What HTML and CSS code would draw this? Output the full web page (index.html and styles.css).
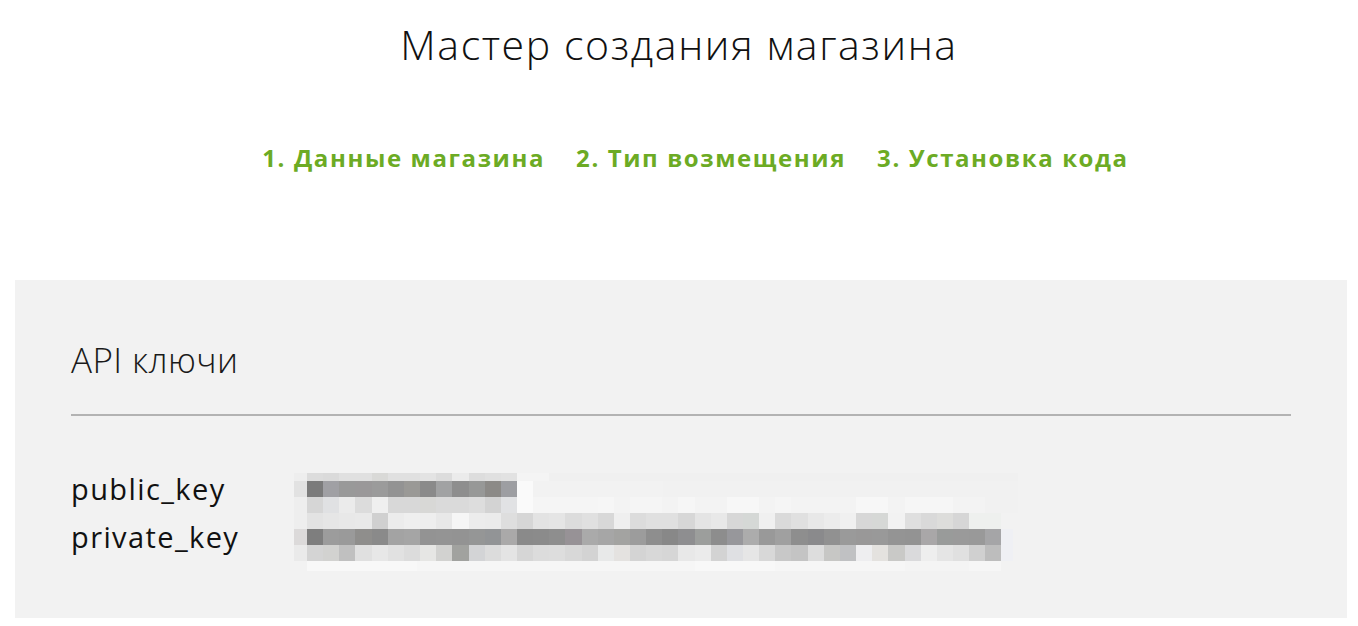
FILE: index.html
```html
<!DOCTYPE html>
<html lang="ru">
<head>
<meta charset="utf-8">
<title>Мастер создания магазина</title>
<link rel="stylesheet" href="styles.css">
</head>
<body>
<div class="page">
  <h1 class="title">Мастер создания магазина</h1>
  <nav class="steps">
    <span class="step">1. Данные магазина</span>
    <span class="step">2. Тип возмещения</span>
    <span class="step">3. Установка кода</span>
  </nav>
  <section class="panel">
    <h2 class="panel-title">API ключи</h2>
    <hr class="divider">
    <div class="keys">
      <div class="key-labels">
        <div class="key-label">public_key</div>
        <div class="key-label">private_key</div>
      </div>
      <svg class="key-values" width="724" height="98" viewBox="0 0 724 98" aria-hidden="true">
        <!-- row A -->
        <rect x="0" y="0" width="724" height="8" fill="#f0f0f0"/>
        <rect x="0" y="0" width="13" height="8" fill="#eeeeee"/>
        <rect x="13" y="0" width="17" height="8" fill="#dcdcdc"/>
        <rect x="29" y="0" width="17" height="8" fill="#dadada"/>
        <rect x="45" y="0" width="17" height="8" fill="#e0e0e0"/>
        <rect x="61" y="0" width="17" height="8" fill="#e0e0e0"/>
        <rect x="78" y="0" width="17" height="8" fill="#d9d9d7"/>
        <rect x="94" y="0" width="17" height="8" fill="#e0e0e0"/>
        <rect x="110" y="0" width="17" height="8" fill="#e0e0e0"/>
        <rect x="126" y="0" width="17" height="8" fill="#e3e3e3"/>
        <rect x="142" y="0" width="17" height="8" fill="#dcdcdc"/>
        <rect x="158" y="0" width="17" height="8" fill="#ebebeb"/>
        <rect x="175" y="0" width="17" height="8" fill="#dddddd"/>
        <rect x="191" y="0" width="17" height="8" fill="#e0e0e0"/>
        <rect x="207" y="0" width="16" height="8" fill="#e2e2e2"/>
        <rect x="223" y="0" width="32" height="8" fill="#f4f4f4"/>
        <!-- row B -->
        <rect x="0" y="8" width="724" height="16" fill="#f1f1f1"/>
        <rect x="0" y="8" width="13" height="16" fill="#e2e2e2"/>
        <rect x="13" y="8" width="17" height="16" fill="#7b7b7b"/>
        <rect x="29" y="8" width="17" height="16" fill="#a0a0a4"/>
        <rect x="45" y="8" width="17" height="16" fill="#999999"/>
        <rect x="61" y="8" width="17" height="16" fill="#9a9899"/>
        <rect x="78" y="8" width="17" height="16" fill="#9b9b9b"/>
        <rect x="94" y="8" width="17" height="16" fill="#939393"/>
        <rect x="110" y="8" width="17" height="16" fill="#9a9996"/>
        <rect x="126" y="8" width="17" height="16" fill="#8a8a8a"/>
        <rect x="142" y="8" width="17" height="16" fill="#a1a2a3"/>
        <rect x="158" y="8" width="17" height="16" fill="#8e8e8e"/>
        <rect x="175" y="8" width="17" height="16" fill="#979897"/>
        <rect x="191" y="8" width="17" height="16" fill="#8c8a87"/>
        <rect x="207" y="8" width="16" height="16" fill="#9d9ea2"/>
        <rect x="223" y="8" width="16" height="16" fill="#fafafa"/>
        <rect x="239" y="8" width="130" height="16" fill="#f2f2f2"/>
        <!-- row C -->
        <rect x="0" y="24" width="724" height="16" fill="#f3f3f3"/>
        <rect x="0" y="24" width="13" height="16" fill="#eeeeee"/>
        <rect x="13" y="24" width="17" height="16" fill="#d6d6d6"/>
        <rect x="29" y="24" width="17" height="16" fill="#e0e1e3"/>
        <rect x="45" y="24" width="17" height="16" fill="#ebebeb"/>
        <rect x="61" y="24" width="17" height="16" fill="#dcdcdc"/>
        <rect x="78" y="24" width="17" height="16" fill="#efefef"/>
        <rect x="94" y="24" width="17" height="16" fill="#d8d8d8"/>
        <rect x="110" y="24" width="17" height="16" fill="#d8d8d8"/>
        <rect x="126" y="24" width="17" height="16" fill="#d8d8d6"/>
        <rect x="142" y="24" width="17" height="16" fill="#dadada"/>
        <rect x="158" y="24" width="17" height="16" fill="#dadada"/>
        <rect x="175" y="24" width="17" height="16" fill="#dddddd"/>
        <rect x="191" y="24" width="17" height="16" fill="#d3d3d3"/>
        <rect x="207" y="24" width="16" height="16" fill="#e1e2e4"/>
        <rect x="223" y="24" width="16" height="16" fill="#fafafa"/>
        <rect x="239" y="24" width="65" height="16" fill="#f5f5f5"/>
        <rect x="304" y="24" width="16" height="16" fill="#f6f6f6"/>
        <rect x="336" y="24" width="32" height="16" fill="#f5f5f5"/>
        <rect x="384" y="24" width="17" height="16" fill="#f6f6f6"/>
        <rect x="433" y="24" width="32" height="16" fill="#f7f7f7"/>
        <rect x="481" y="24" width="16" height="16" fill="#f5f5f5"/>
        <rect x="562" y="24" width="32" height="16" fill="#f7f7f7"/>
        <rect x="611" y="24" width="48" height="16" fill="#f6f6f6"/>
        <rect x="691" y="24" width="33" height="16" fill="#f1f1f1"/>
        <!-- row D -->
        <rect x="0" y="40" width="13" height="16" fill="#eeeeee"/>
        <rect x="13" y="40" width="17" height="16" fill="#e3e3e3"/>
        <rect x="29" y="40" width="17" height="16" fill="#e6e6e6"/>
        <rect x="45" y="40" width="17" height="16" fill="#e8e8e8"/>
        <rect x="61" y="40" width="17" height="16" fill="#e9e9e9"/>
        <rect x="78" y="40" width="17" height="16" fill="#d0d0d0"/>
        <rect x="94" y="40" width="17" height="16" fill="#ececec"/>
        <rect x="110" y="40" width="17" height="16" fill="#efefef"/>
        <rect x="126" y="40" width="17" height="16" fill="#eeeeee"/>
        <rect x="142" y="40" width="17" height="16" fill="#e8e8e8"/>
        <rect x="158" y="40" width="17" height="16" fill="#f6f6f6"/>
        <rect x="175" y="40" width="17" height="16" fill="#ececec"/>
        <rect x="191" y="40" width="17" height="16" fill="#ebebeb"/>
        <rect x="207" y="40" width="17" height="16" fill="#dedede"/>
        <rect x="223" y="40" width="17" height="16" fill="#d6d6d6"/>
        <rect x="239" y="40" width="17" height="16" fill="#e3e3e3"/>
        <rect x="255" y="40" width="17" height="16" fill="#e5e5e5"/>
        <rect x="271" y="40" width="18" height="16" fill="#dcdcdc"/>
        <rect x="288" y="40" width="17" height="16" fill="#e0e0e0"/>
        <rect x="304" y="40" width="17" height="16" fill="#d8d8d8"/>
        <rect x="320" y="40" width="17" height="16" fill="#efefef"/>
        <rect x="336" y="40" width="17" height="16" fill="#dcdcdc"/>
        <rect x="352" y="40" width="17" height="16" fill="#e0e0e0"/>
        <rect x="368" y="40" width="17" height="16" fill="#e0e0e0"/>
        <rect x="384" y="40" width="18" height="16" fill="#d7d7d7"/>
        <rect x="401" y="40" width="17" height="16" fill="#e4e4e4"/>
        <rect x="417" y="40" width="17" height="16" fill="#e8e8e8"/>
        <rect x="433" y="40" width="17" height="16" fill="#d7d7d7"/>
        <rect x="449" y="40" width="17" height="16" fill="#d5d8d6"/>
        <rect x="465" y="40" width="17" height="16" fill="#f0f0f0"/>
        <rect x="481" y="40" width="17" height="16" fill="#dadada"/>
        <rect x="497" y="40" width="18" height="16" fill="#e0e0e0"/>
        <rect x="514" y="40" width="17" height="16" fill="#e8e8e8"/>
        <rect x="530" y="40" width="17" height="16" fill="#ececec"/>
        <rect x="546" y="40" width="17" height="16" fill="#f0f0f0"/>
        <rect x="562" y="40" width="17" height="16" fill="#d7d7d7"/>
        <rect x="578" y="40" width="17" height="16" fill="#d6d8d6"/>
        <rect x="594" y="40" width="18" height="16" fill="#f2f2f2"/>
        <rect x="611" y="40" width="17" height="16" fill="#dfdfdf"/>
        <rect x="627" y="40" width="17" height="16" fill="#d9d9d9"/>
        <rect x="643" y="40" width="17" height="16" fill="#dddddb"/>
        <rect x="659" y="40" width="17" height="16" fill="#d6d6d6"/>
        <rect x="675" y="40" width="32" height="16" fill="#eef0ee"/>
        <!-- row E -->
        <rect x="0" y="56" width="13" height="16" fill="#dcdada"/>
        <rect x="13" y="56" width="17" height="16" fill="#7e7e7e"/>
        <rect x="29" y="56" width="17" height="16" fill="#9c9c9c"/>
        <rect x="45" y="56" width="17" height="16" fill="#9a9a9a"/>
        <rect x="61" y="56" width="17" height="16" fill="#8f8e8c"/>
        <rect x="78" y="56" width="17" height="16" fill="#8a8a8a"/>
        <rect x="94" y="56" width="17" height="16" fill="#a3a3a3"/>
        <rect x="110" y="56" width="17" height="16" fill="#a5a5a5"/>
        <rect x="126" y="56" width="17" height="16" fill="#939393"/>
        <rect x="142" y="56" width="17" height="16" fill="#949494"/>
        <rect x="158" y="56" width="17" height="16" fill="#939393"/>
        <rect x="175" y="56" width="17" height="16" fill="#959696"/>
        <rect x="191" y="56" width="17" height="16" fill="#929496"/>
        <rect x="207" y="56" width="17" height="16" fill="#aaa9a9"/>
        <rect x="223" y="56" width="17" height="16" fill="#8a8a8a"/>
        <rect x="239" y="56" width="17" height="16" fill="#8b8b8b"/>
        <rect x="255" y="56" width="17" height="16" fill="#8e8e8e"/>
        <rect x="271" y="56" width="18" height="16" fill="#979296"/>
        <rect x="288" y="56" width="17" height="16" fill="#aaaaaa"/>
        <rect x="304" y="56" width="17" height="16" fill="#a6a6a6"/>
        <rect x="320" y="56" width="17" height="16" fill="#a3a3a1"/>
        <rect x="336" y="56" width="17" height="16" fill="#9c9c9c"/>
        <rect x="352" y="56" width="17" height="16" fill="#8e8e8e"/>
        <rect x="368" y="56" width="17" height="16" fill="#888888"/>
        <rect x="384" y="56" width="18" height="16" fill="#8e8e90"/>
        <rect x="401" y="56" width="17" height="16" fill="#9c9e9c"/>
        <rect x="417" y="56" width="17" height="16" fill="#8d8d8d"/>
        <rect x="433" y="56" width="17" height="16" fill="#97979b"/>
        <rect x="449" y="56" width="17" height="16" fill="#acacac"/>
        <rect x="465" y="56" width="17" height="16" fill="#999999"/>
        <rect x="481" y="56" width="17" height="16" fill="#a0a0a0"/>
        <rect x="497" y="56" width="18" height="16" fill="#8e8e8e"/>
        <rect x="514" y="56" width="17" height="16" fill="#8a8a8c"/>
        <rect x="530" y="56" width="17" height="16" fill="#919191"/>
        <rect x="546" y="56" width="17" height="16" fill="#9a9a9a"/>
        <rect x="562" y="56" width="17" height="16" fill="#999898"/>
        <rect x="578" y="56" width="17" height="16" fill="#999999"/>
        <rect x="594" y="56" width="18" height="16" fill="#949494"/>
        <rect x="611" y="56" width="17" height="16" fill="#939393"/>
        <rect x="627" y="56" width="17" height="16" fill="#a9a7a8"/>
        <rect x="643" y="56" width="17" height="16" fill="#999b9a"/>
        <rect x="659" y="56" width="17" height="16" fill="#9a9a9a"/>
        <rect x="675" y="56" width="17" height="16" fill="#999999"/>
        <rect x="691" y="56" width="16" height="16" fill="#a5a5a7"/>
        <rect x="707" y="56" width="12" height="32" fill="#eff0f4"/>
        <!-- row F -->
        <rect x="0" y="72" width="13" height="16" fill="#eaeaea"/>
        <rect x="13" y="72" width="17" height="16" fill="#d4d4d4"/>
        <rect x="29" y="72" width="17" height="16" fill="#d2d2d0"/>
        <rect x="45" y="72" width="17" height="16" fill="#c0c0c0"/>
        <rect x="61" y="72" width="17" height="16" fill="#e0e0e0"/>
        <rect x="78" y="72" width="17" height="16" fill="#e7e7e7"/>
        <rect x="94" y="72" width="17" height="16" fill="#e1e1e1"/>
        <rect x="110" y="72" width="17" height="16" fill="#dcdcdc"/>
        <rect x="126" y="72" width="17" height="16" fill="#e6e6e4"/>
        <rect x="142" y="72" width="17" height="16" fill="#d2d2d0"/>
        <rect x="158" y="72" width="17" height="16" fill="#a1a29f"/>
        <rect x="175" y="72" width="17" height="16" fill="#d3d4d6"/>
        <rect x="191" y="72" width="17" height="16" fill="#dcdcdc"/>
        <rect x="207" y="72" width="17" height="16" fill="#e4e4e4"/>
        <rect x="223" y="72" width="17" height="16" fill="#d6d6d6"/>
        <rect x="239" y="72" width="17" height="16" fill="#dcdcdc"/>
        <rect x="255" y="72" width="17" height="16" fill="#dddddd"/>
        <rect x="271" y="72" width="18" height="16" fill="#d8d8d8"/>
        <rect x="288" y="72" width="17" height="16" fill="#d3d3d3"/>
        <rect x="304" y="72" width="17" height="16" fill="#e8e9e9"/>
        <rect x="320" y="72" width="17" height="16" fill="#e4e2e0"/>
        <rect x="336" y="72" width="17" height="16" fill="#d4d4d4"/>
        <rect x="352" y="72" width="17" height="16" fill="#d8d8d8"/>
        <rect x="368" y="72" width="17" height="16" fill="#d6d6d6"/>
        <rect x="384" y="72" width="18" height="16" fill="#e8e8e8"/>
        <rect x="401" y="72" width="17" height="16" fill="#ebebeb"/>
        <rect x="417" y="72" width="17" height="16" fill="#d3d3d3"/>
        <rect x="433" y="72" width="17" height="16" fill="#dfe0e3"/>
        <rect x="449" y="72" width="17" height="16" fill="#e6e6e6"/>
        <rect x="465" y="72" width="17" height="16" fill="#d8d8d8"/>
        <rect x="481" y="72" width="17" height="16" fill="#c8c8c8"/>
        <rect x="497" y="72" width="18" height="16" fill="#c4c4c4"/>
        <rect x="514" y="72" width="17" height="16" fill="#dddddd"/>
        <rect x="530" y="72" width="17" height="16" fill="#c7c7c5"/>
        <rect x="546" y="72" width="17" height="16" fill="#c0c1c3"/>
        <rect x="562" y="72" width="17" height="16" fill="#eeeef0"/>
        <rect x="578" y="72" width="17" height="16" fill="#e4e2df"/>
        <rect x="594" y="72" width="18" height="16" fill="#c9c9c7"/>
        <rect x="611" y="72" width="17" height="16" fill="#dadadc"/>
        <rect x="627" y="72" width="17" height="16" fill="#eeeeee"/>
        <rect x="643" y="72" width="17" height="16" fill="#e5e5e5"/>
        <rect x="659" y="72" width="17" height="16" fill="#e0e0e0"/>
        <rect x="675" y="72" width="17" height="16" fill="#d0d0d0"/>
        <rect x="691" y="72" width="16" height="16" fill="#bdbdbd"/>
        <!-- row G -->
        <rect x="0" y="88" width="13" height="10" fill="#f2f2f2"/>
        <rect x="13" y="88" width="694" height="10" fill="#f6f6f6"/>
        <rect x="13" y="88" width="110" height="10" fill="#f8f8f8"/>
        <rect x="401" y="88" width="80" height="10" fill="#f8f8f8"/>
        <rect x="611" y="88" width="64" height="10" fill="#f4f4f4"/>
      </svg>
    </div>
  </section>
</div>
</body>
</html>
```

FILE: styles.css
```css
* {
  box-sizing: border-box;
}

body {
  margin: 0;
  background: #ffffff;
  color: #111111;
  font-family: "Open Sans", "Noto Sans", "Liberation Sans", sans-serif;
}

.page {
  padding-top: 18px;
  padding-bottom: 8px;
}

.title {
  margin: 0;
  font-size: 41px;
  font-weight: 300;
  line-height: 52px;
  letter-spacing: 1.6px;
  text-align: center;
  color: #111111;
}

.steps {
  margin-top: 73px;
  padding-left: 33px;
  display: flex;
  justify-content: center;
  gap: 31px;
  font-size: 24px;
  font-weight: 700;
  line-height: 30px;
  letter-spacing: 1.6px;
  color: #6cab24;
}

.panel {
  margin: 107px 11px 0 15px;
  padding: 58px 56px 47px;
  background: #f2f2f2;
}

.panel-title {
  margin: 0;
  font-size: 35px;
  font-weight: 300;
  line-height: 44px;
  letter-spacing: 0.4px;
  color: #1a1a1a;
}

.divider {
  margin: 32px 0 0;
  height: 2px;
  border: 0;
  background: #b3b3b3;
}

.keys {
  margin-top: 49px;
  display: grid;
  grid-template-columns: 223px auto;
  align-items: start;
}

.key-label {
  font-size: 29px;
  font-weight: 400;
  line-height: 48px;
  letter-spacing: 1.4px;
  color: #111111;
}

.key-values {
  display: block;
  margin-top: 8px;
}
```
